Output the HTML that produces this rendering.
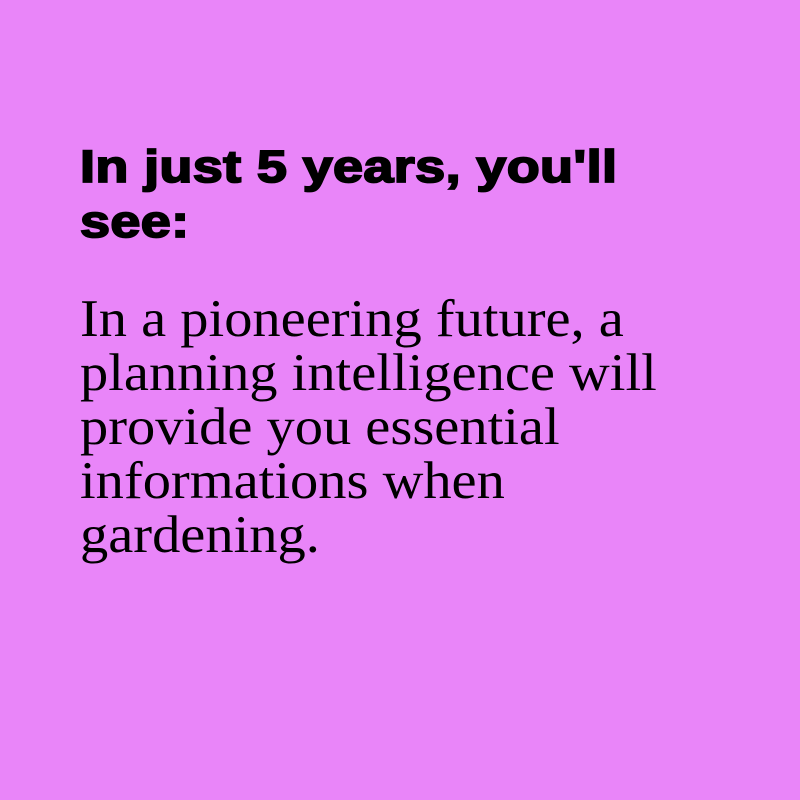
<!DOCTYPE html>
<html><head><style>
html,body{margin:0;padding:0}
body{width:800px;height:800px;background:#e985f9;position:relative;overflow:hidden}
h1{position:absolute;left:80px;top:139px;margin:0;width:620px;white-space:nowrap;font:bold 45px/55px "Liberation Sans",sans-serif;color:#000;-webkit-text-stroke:1.8px #000;letter-spacing:0.3px;transform:scaleX(1.2);transform-origin:0 0}
p{position:absolute;left:80px;top:292px;margin:0;width:640px;white-space:nowrap;font:53px/54px "Liberation Serif",serif;color:#000;transform:scaleX(1.065);transform-origin:0 0}
</style></head><body>
<h1>In just 5 years, you'll<br>see:</h1>
<p>In a pioneering future, a<br>planning intelligence will<br>provide you essential<br>informations when<br>gardening.</p>
</body></html>
